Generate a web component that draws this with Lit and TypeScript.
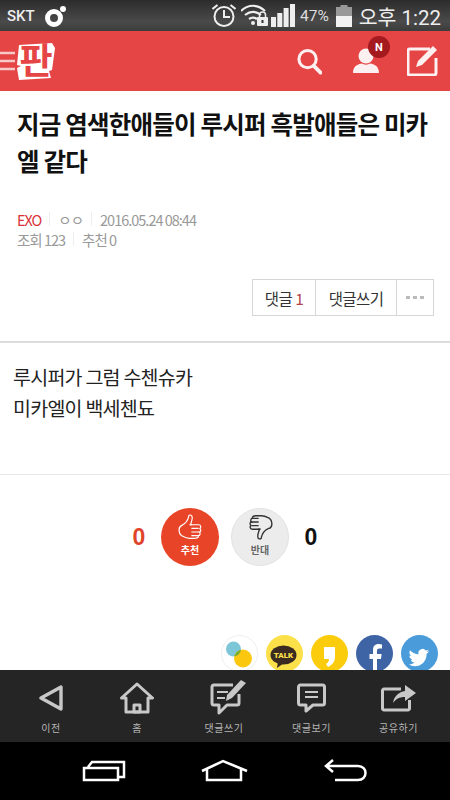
import { LitElement, html, css } from "lit";
import { customElement } from "lit/decorators.js";

@customElement("app-root")
export class AppRoot extends LitElement {
  static styles = css`
    :host { display: flex; flex-direction: column; width: 450px; height: 800px; overflow: hidden; background: #fff; font-family: "Noto Sans CJK KR", "Noto Sans", sans-serif; color: #222; }
    svg { display: block; flex: none; }
    .status { height: 31px; flex: none; background: linear-gradient(#2c2c2c, #4a4a4a 70%, #3c3c3c); display: flex; align-items: center; color: #eee; font-family: Roboto, sans-serif; }
    .status .carrier { margin-left: 7px; font-size: 15px; font-weight: 500; width: 38px; }
    .status .spacer { flex: 1; }
    .status .alarm { margin-right: 5px; }
    .status .wifi { margin-right: 3px; }
    .status .signal { margin-right: 5px; }
    .status .pct { font-size: 15.5px; margin-right: 5px; color: #ddd; width: 31px; white-space: nowrap; }
    .status .clock { font-family: Roboto, "Noto Sans CJK KR", sans-serif; font-size: 20.5px; margin: 0 9px 0 6px; width: 83px; white-space: nowrap; text-align: right; }
    .header { height: 60px; flex: none; background: #e64545; display: flex; align-items: center; position: relative; }
    .header .actions { margin-left: auto; display: flex; align-items: center; padding-right: 12px; }
    .header .search { margin-right: 31px; }
    .header .user { margin-right: 28px; }
    .logotext { font-family: "Noto Sans CJK KR", sans-serif; font-weight: 700; font-size: 36px; }
    .badge { position: absolute; left: 368px; top: 5px; width: 22px; height: 22px; border-radius: 50%; background: #a41a1f; color: #fff; font: 700 11px Roboto, sans-serif; display: flex; align-items: center; justify-content: center; }
    .title { margin: 14px 16px 0 17px; font-size: 24.5px; line-height: 37px; font-weight: 700; color: #111; letter-spacing: -.8px; word-break: break-all; }
    .meta { margin: 30px 0 0 17px; font-size: 14.5px; color: #999; letter-spacing: -1px; }
    .meta .row { display: flex; align-items: center; height: 20px; }
    .meta .red { color: #d8343a; }
    .sep { width: 1px; height: 14px; background: #eee; margin: 0 8px; }
    .btns { align-self: flex-end; margin: 30px 16px 0 0; display: flex; height: 37px; border: 1px solid #d6d6d6; box-sizing: border-box; font-size: 15.5px; color: #333; letter-spacing: -.6px; }
    .btns div { display: flex; align-items: center; justify-content: center; }
    .btns .a { width: 62px; border-right: 1px solid #d6d6d6; gap: 3px; }
    .btns .a b { color: #b6444a; font-weight: 400; }
    .btns .b { width: 80px; border-right: 1px solid #d6d6d6; }
    .btns .c { width: 36px; gap: 3px; }
    .btns .c i { width: 4px; height: 3px; background: #bbb; }
    .hr1 { height: 2px; background: #dcdcdc; margin-top: 25px; flex: none; }
    .body { margin: 19px 0 0 13px; font-size: 19.5px; line-height: 30.5px; color: #222; letter-spacing: -.75px; }
    .hr2 { height: 1px; background: #e8e8e8; margin-top: 51px; flex: none; }
    .vote { display: flex; align-items: center; justify-content: center; margin-top: 32px; height: 60px; flex: none; }
    .num { font: 700 23px "Liberation Sans", sans-serif; width: 14px; text-align: center; }
    .num.r { color: #e0452c; margin-right: 15px; }
    .num.k { color: #111; margin-left: 15px; }
    .circ { width: 58px; height: 58px; border-radius: 50%; display: flex; flex-direction: column; align-items: center; font-size: 10px; font-weight: 700; line-height: 14px; }
    .up { background: #e84427; color: #fff; margin-right: 12px; }
    .up svg { margin-top: 5px; }
    .down { background: #ececec; color: #666; border: 1px solid #e2e2e2; box-sizing: border-box; }
    .down svg { margin-top: 4px; }
    .circ span { margin-top: 2px; }
    .share { display: flex; justify-content: flex-end; gap: 8px; margin-top: 68px; padding-right: 12px; height: 35px; overflow: hidden; flex: none; align-items: flex-start; }
    .ic { width: 37px; height: 37px; flex: none; }
    .tabbar { height: 72px; flex: none; background: #252525; display: grid; grid-template-columns: 102px 70px 104px 71px 103px; }
    .tab { display: flex; flex-direction: column; align-items: center; color: #b5b5b5; font-size: 10px; line-height: 12px; }
    .tab .ico { height: 40px; margin-top: 8px; display: flex; align-items: center; }
    .tab .ico.w { padding-left: 7px; }
    .tab span { margin-top: 4px; letter-spacing: .5px; white-space: nowrap; }
    .nav { flex: 1; background: #000; display: flex; align-items: center; }
  `;

  render() {
    const c = "#c8c8c8";
    return html`
      <div class="status">
        <span class="carrier">SKT</span>
        <svg width="24" height="24" viewBox="0 0 24 24"><circle cx="9" cy="14" r="6.5" fill="none" stroke="#fff" stroke-width="5"/><circle cx="18" cy="5" r="3" fill="#fff"/></svg>
        <span class="spacer"></span>
        <svg class="alarm" width="24" height="23" viewBox="3 2 24 23" fill="none" stroke="#eee" stroke-width="2"><circle cx="15" cy="14.500" r="9.500"/><path d="M15 8v7h6M3.500 7l5-4M26.500 7l-5-4"/></svg>
        <svg class="wifi" width="27" height="23" viewBox="1 1 27 23"><g fill="none" stroke="#eee" stroke-width="2.200"><path d="M1 8c7-7 17-7 24 0M5 12c5-4 11-4 16 0M9 16c3-2 5-2 8 0"/></g><circle cx="13" cy="20" r="2" fill="#eee"/><rect x="17" y="14" width="11" height="9" rx="1" fill="#eee"/><path d="M19.500 14v-2a3 3 0 0 1 6 0v2" fill="none" stroke="#eee" stroke-width="1.500"/><rect x="21.500" y="17" width="2" height="3" fill="#333"/></svg>
        <svg class="signal" width="24" height="23" viewBox="0 0 24 23" fill="#eee"><rect x="0" y="13" width="5" height="10"/><rect x="6.300" y="9" width="5" height="14"/><rect x="12.600" y="4" width="5" height="19"/><rect x="19" y="0" width="5" height="23"/></svg>
        <span class="pct">47%</span>
        <svg width="16" height="22" viewBox="0 0 16 22"><rect x="4.500" y="0" width="7" height="3" fill="#999"/><rect x="0" y="2" width="16" height="9" fill="#999"/><rect x="0" y="11" width="16" height="11" fill="#f2f2f2"/></svg>
        <span class="clock">오후 1:22</span>
      </div>
      <div class="header">
        <svg width="58" height="60" viewBox="0 0 58 60">
          <path d="M0 22h15M0 30h15M0 38h15" stroke="#f6c9c9" stroke-width="2.500"/>
          <path d="M19 14l33-2 3 5-3 22-3 1 2 7-32 2-2-12 4-2-4-1z" fill="#fff"/>
          <text class="logotext" x="36" y="43" text-anchor="middle" fill="#e64545">판</text>
        </svg>
        <div class="actions">
          <svg class="search" width="25" height="27" viewBox="1 2 26 27" fill="none" stroke="#fdf0f0"><circle cx="12" cy="13" r="9" stroke-width="3.200"/><path d="M18.500 20l7 7" stroke-width="4" stroke-linecap="round"/></svg>
          <svg class="user" width="26" height="26" viewBox="0 0 26 26" fill="#fdf0f0"><circle cx="13" cy="8" r="7.500"/><path d="M0 25c0-7 5-9 9-9.500 2 1.500 6 1.500 8 0 4 .5 9 2.500 9 9.500z"/></svg>
          <svg width="31" height="30" viewBox="1 1 31 30"><path d="M24 4H4a2 2 0 0 0-2 2v22a2 2 0 0 0 2 2h24a2 2 0 0 0 2-2V13" fill="none" stroke="#fdf0f0" stroke-width="3"/><path d="M27 1l4 4-15 15-6 2 2-6z" fill="#fdf0f0"/></svg>
        </div>
        <div class="badge">N</div>
      </div>
      <div class="title">지금 염색한애들이 루시퍼 흑발애들은 미카엘 같다</div>
      <div class="meta">
        <div class="row"><span class="red">EXO</span><i class="sep"></i><span>ㅇㅇ</span><i class="sep"></i><span>2016.05.24 08:44</span></div>
        <div class="row"><span>조회 123</span><i class="sep"></i><span>추천 0</span></div>
      </div>
      <div class="btns">
        <div class="a">댓글 <b>1</b></div>
        <div class="b">댓글쓰기</div>
        <div class="c"><i></i><i></i><i></i></div>
      </div>
      <div class="hr1"></div>
      <div class="body">루시퍼가 그럼 수첸슈카<br />미카엘이 백세첸됴</div>
      <div class="hr2"></div>
      <div class="vote">
        <span class="num r">0</span>
        <div class="circ up">
          <svg width="26" height="28" viewBox="1 1 27 31" fill="none" stroke="#fff" stroke-width="1.300"><path d="M5 15c4-2 7-5 8-10 0-3 4-2 4 1 0 3-1 5-2 8h9c3 0 3 4 1 4 2 1 2 4 0 4 1 1 1 4-1 4 0 3-2 3-4 3h-6c-4 0-7-2-9-3-3-2-4-9 0-11z"/><path d="M17 14h-3M24 18h-8M25 22h-9M24 26h-8"/></svg>
          <span>추천</span>
        </div>
        <div class="circ down">
          <svg width="26" height="28" viewBox="0 2 27 31" fill="none" stroke="#333" stroke-width="1.500"><path d="M23 19c-4 2-7 5-8 10 0 3-4 2-4-1 0-3 1-5 2-8H5c-3 0-3-4-1-4-2-1-2-4 0-4-1-1-1-4 1-4 0-3 2-3 4-3h6c4 0 7 2 9 3 3 2 4 9 0 11z"/><path d="M11 20h3M4 16h8M3 12h9M4 8h8"/></svg>
          <span>반대</span>
        </div>
        <span class="num k">0</span>
      </div>
      <div class="share">
        <svg class="ic" viewBox="0 0 37 37"><defs><clipPath id="bl"><circle cx="12.500" cy="14" r="7.500"/></clipPath></defs><circle cx="18.500" cy="18.500" r="18" fill="#fff" stroke="#eee"/><circle cx="12.500" cy="14" r="7.500" fill="#7cc6d8"/><circle cx="22" cy="23.500" r="9" fill="#fcc80f"/><circle cx="22" cy="23.500" r="9" fill="#7fae2e" clip-path="url(#bl)"/></svg>
        <svg class="ic" viewBox="0 0 37 37"><circle cx="18.500" cy="18.500" r="18.500" fill="#fbe04a"/><ellipse cx="17.500" cy="20" rx="13" ry="9.500" fill="#3b2a20"/><path d="M12 26l-1 7 7-5z" fill="#3b2a20"/><text x="17.500" y="23" text-anchor="middle" font-family="Roboto, sans-serif" font-size="8" font-weight="900" fill="#fbe04a">TALK</text></svg>
        <svg class="ic" viewBox="0 0 37 37"><circle cx="18.500" cy="18.500" r="18.500" fill="#fbcc0c"/><path d="M13 12h11v10c0 5-3 8-7 10l-2-3c2-1 3-3 3-5h-5z" fill="#fff"/></svg>
        <svg class="ic" viewBox="0 0 37 37"><circle cx="18.500" cy="18.500" r="18.500" fill="#3e64a6"/><path d="M21 35V24h4l.6-5H21v-3c0-1.500.5-2.500 2.300-2.500H26V9.400c-.8-.1-2-.4-3.500-.4-3.500 0-5.500 2.200-5.500 6V19h-3.500v5H17v11z" fill="#fff"/></svg>
        <svg class="ic" viewBox="0 0 37 37"><circle cx="18.500" cy="18.500" r="18.500" fill="#4a9bda"/><path transform="translate(3.200 7) scale(.83)" d="M30 11c-1 .5-2 .7-3 .8 1-.6 2-1.600 2.300-2.800-1 .6-2.100 1-3.300 1.300a5 5 0 0 0-8.700 4.600C13 14.700 9.500 12.800 7 10c-1.400 2.400-.7 5.300 1.500 6.800-.8 0-1.600-.2-2.300-.6 0 2.500 1.800 4.500 4.100 5-.8.200-1.500.2-2.300.1.700 2 2.500 3.400 4.700 3.500-2.200 1.700-4.800 2.400-7.500 2.100 9.500 6 22-.2 21.800-12.800 1.100-.7 2.100-1.700 3-2.800z" fill="#fff"/></svg>
      </div>
      <div class="tabbar">
        <div class="tab"><div class="ico"><svg width="24" height="28" viewBox="0 0 24 28" fill="none" stroke="${c}" stroke-width="3.400" stroke-linejoin="round"><path d="M22 3v22L2 14z"/></svg></div><span>이전</span></div>
        <div class="tab"><div class="ico"><svg width="34" height="32" viewBox="0 0 34 32" fill="none" stroke="${c}" stroke-width="3" stroke-linejoin="round"><path d="M1.500 16L17 2l15.500 14H28v14H6V16z"/><rect x="14" y="23" width="6" height="7"/></svg></div><span>홈</span></div>
        <div class="tab"><div class="ico w"><svg width="38" height="36" viewBox="0 0 38 36"><path d="M24 5H5a2 2 0 0 0-2 2v16a2 2 0 0 0 2 2h5v8l8-8h10a2 2 0 0 0 2-2v-9" fill="none" stroke="${c}" stroke-width="3" stroke-linejoin="round"/><path d="M8 12h11M8 18h8" stroke="${c}" stroke-width="2"/><path d="M32 0l5 3-14 15-6 3 1-6z" fill="${c}"/></svg></div><span>댓글쓰기</span></div>
        <div class="tab"><div class="ico"><svg width="29" height="30" viewBox="0 0 29 30" fill="none" stroke="${c}" stroke-linejoin="round"><path d="M3.500 2h22a2 2 0 0 1 2 2v16a2 2 0 0 1-2 2H16l-7 6v-6H3.500a2 2 0 0 1-2-2V4a2 2 0 0 1 2-2z" stroke-width="3"/><path d="M8 9h13M8 14h13" stroke-width="2"/></svg></div><span>댓글보기</span></div>
        <div class="tab"><div class="ico"><svg width="36" height="27" viewBox="0 0 36 27"><path d="M20 4H3a1.500 1.500 0 0 0-1.500 1.500v18A1.500 1.500 0 0 0 3 25h24a1.500 1.500 0 0 0 1.500-1.500V15" fill="none" stroke="${c}" stroke-width="3"/><path d="M24 0l11 8-11 8v-4c-6 0-9 2-12 6 1-7 6-11 12-12z" fill="${c}"/></svg></div><span>공유하기</span></div>
      </div>
      <div class="nav">
        <svg width="450" height="58" viewBox="0 0 450 58" fill="none" stroke="#fff" stroke-width="2.500">
          <path d="M84 26h34v12H84zM88 25l4-5h32v15h-6"/>
          <path d="M202 29l21-10 24 10M207 27v11h34V27"/>
          <path d="M333 18l-7 6 7 6M326 24h32c10 0 10 14 0 14h-23"/>
        </svg>
      </div>
    `;
  }
}
